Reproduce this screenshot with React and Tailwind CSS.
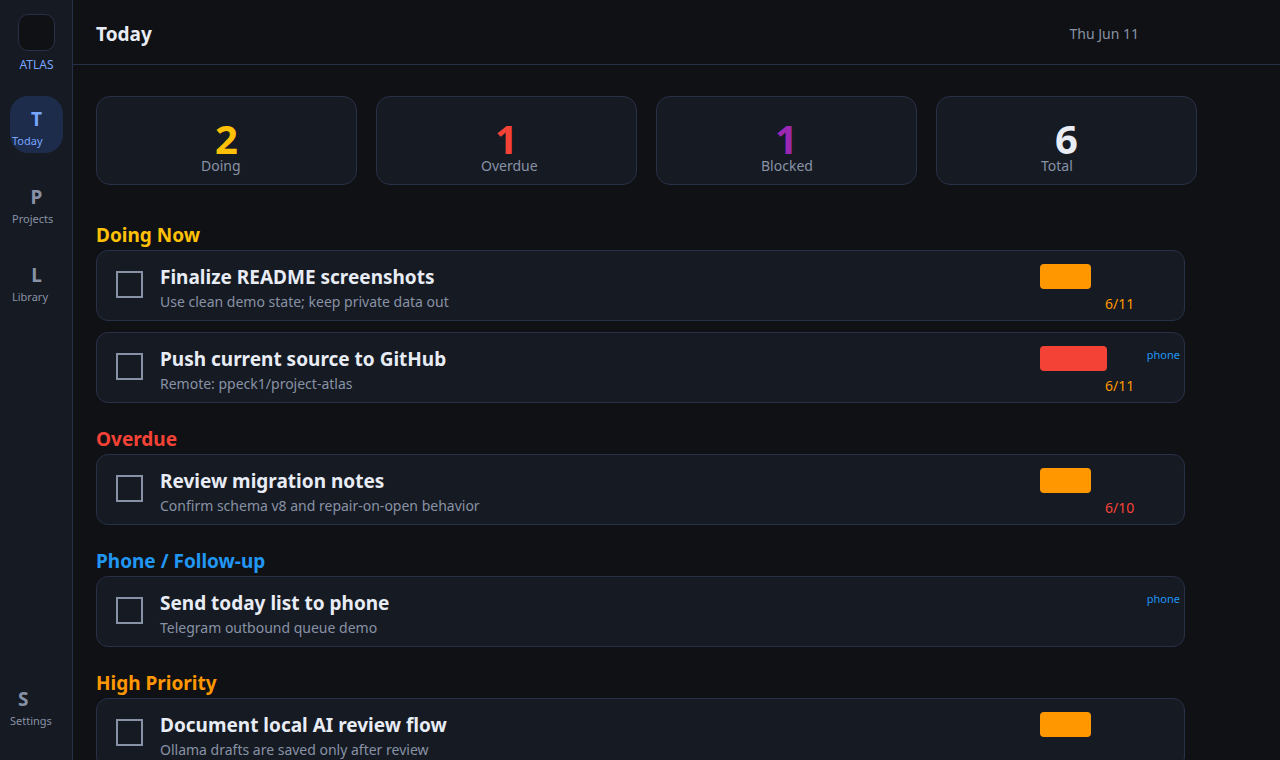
import React from "react";

const stats = [
  { label: "Doing", value: 2, color: "text-[#ffc107]" },
  { label: "Overdue", value: 1, color: "text-[#f44336]" },
  { label: "Blocked", value: 1, color: "text-[#9c27b0]" },
  { label: "Total", value: 6, color: "text-[#e8ecf5]" },
];

const medium = "w-[51px] bg-[#ff9800]";
const high = "w-[67px] bg-[#f44336]";

const sections = [
  {
    title: "Doing Now",
    color: "text-[#ffc107]",
    tasks: [
      { title: "Finalize README screenshots", note: "Use clean demo state; keep private data out", badge: medium, due: "6/11", dueColor: "text-[#ff9800]" },
      { title: "Push current source to GitHub", note: "Remote: ppeck1/project-atlas", badge: high, due: "6/11", dueColor: "text-[#ff9800]", phone: true },
    ],
  },
  {
    title: "Overdue",
    color: "text-[#f44336]",
    tasks: [
      { title: "Review migration notes", note: "Confirm schema v8 and repair-on-open behavior", badge: medium, due: "6/10", dueColor: "text-[#f44336]" },
    ],
  },
  {
    title: "Phone / Follow-up",
    color: "text-[#2196f3]",
    tasks: [{ title: "Send today list to phone", note: "Telegram outbound queue demo", phone: true }],
  },
  {
    title: "High Priority",
    color: "text-[#ff9800]",
    tasks: [{ title: "Document local AI review flow", note: "Ollama drafts are saved only after review", badge: medium }],
  },
];

function NavItem({ letter, label, active }) {
  return (
    <a
      href={"#" + label.toLowerCase()}
      aria-current={active ? "page" : undefined}
      className={
        "flex h-[57px] flex-col rounded-[18px] pt-3 " +
        (active ? "bg-[#1c2c4a] text-[#78a5ff]" : "text-[#8892a6]")
      }
    >
      <span className="text-center text-[19px] leading-[22px] font-bold">{letter}</span>
      <span className="pl-0.5 text-[11px] leading-[22px]">{label}</span>
    </a>
  );
}

function TaskCard({ id, task }) {
  return (
    <li className="flex h-[71px] shrink-0 items-start rounded-xl border border-[#283048] bg-[#161a22]">
      <input
        id={id}
        type="checkbox"
        className="mt-5 ml-[19px] size-[27px] shrink-0 appearance-none border-2 border-[#8892a6] checked:bg-[#8892a6]"
      />
      <div className="ml-[17px] min-w-0 flex-1 pt-3">
        <label htmlFor={id} className="block text-[19px] leading-7 font-bold text-[#e8ecf5]">
          {task.title}
        </label>
        <p className="text-sm leading-[22px] text-[#8892a6]">{task.note}</p>
      </div>
      <div className="w-36 shrink-0 pt-[13px]">
        <div className="flex h-[25px] items-start justify-between">
          <span className={"h-[25px] rounded " + (task.badge || "")} />
          {task.phone && <span className="pr-1 text-[11px] leading-[18px] text-[#2196f3]">phone</span>}
        </div>
        {task.due && <div className={"mt-1 pl-[65px] text-sm leading-[22px] " + task.dueColor}>{task.due}</div>}
      </div>
    </li>
  );
}

export default function App() {
  return (
    <div className="flex h-screen overflow-hidden bg-[#101114] font-['Noto_Sans',sans-serif] text-[#e8ecf5]">
      <nav className="flex w-[73px] shrink-0 flex-col border-r border-[#283048] bg-[#161a22] pt-3.5 pr-[9px] pb-7 pl-2.5">
        <div className="mx-auto size-[37px] rounded-[10px] border border-[#283048] bg-[#101114]" />
        <div className="mt-1 text-center text-[12px] leading-5 text-[#78a5ff]">ATLAS</div>
        <div className="mt-[21px] flex flex-col gap-[21px]">
          <NavItem letter="T" label="Today" active />
          <NavItem letter="P" label="Projects" />
          <NavItem letter="L" label="Library" />
        </div>
        <a href="#settings" className="mt-auto flex flex-col text-[#8892a6]">
          <span className="pl-2 text-[19px] leading-[22px] font-bold">S</span>
          <span className="text-[11px] leading-[22px]">Settings</span>
        </a>
      </nav>
      <div className="flex min-w-0 flex-1 flex-col">
        <header className="flex h-[65px] shrink-0 items-center justify-between border-b border-[#283048] pt-[3px] pr-[141px] pl-[23px]">
          <h1 className="text-[19px] leading-7 font-bold">Today</h1>
          <time className="text-sm text-[#8892a6]">Thu Jun 11</time>
        </header>
        <main className="min-h-0 flex-1 overflow-hidden pt-[31px] pl-[23px]">
          <dl className="mr-[83px] grid grid-cols-4 gap-[19px]">
            {stats.map((s) => (
              <div key={s.label} className="flex h-[89px] flex-col-reverse justify-end rounded-[14px] border border-[#283048] bg-[#161a22] pt-6">
                <dt className="pl-[104px] text-sm leading-[18px] text-[#8892a6]">{s.label}</dt>
                <dd className={"text-center text-[40px] leading-9 font-bold " + s.color}>{s.value}</dd>
              </div>
            ))}
          </dl>
          <div className="mt-9 mr-[95px] flex flex-col gap-[22px]">
            {sections.map((section, i) => (
              <section key={section.title}>
                <h2 className={"pb-px text-[19px] leading-7 font-bold " + section.color}>{section.title}</h2>
                <ul className="flex flex-col gap-[11px]">
                  {section.tasks.map((task, j) => (
                    <TaskCard key={task.title} id={"task-" + i + "-" + j} task={task} />
                  ))}
                </ul>
              </section>
            ))}
          </div>
        </main>
      </div>
    </div>
  );
}
